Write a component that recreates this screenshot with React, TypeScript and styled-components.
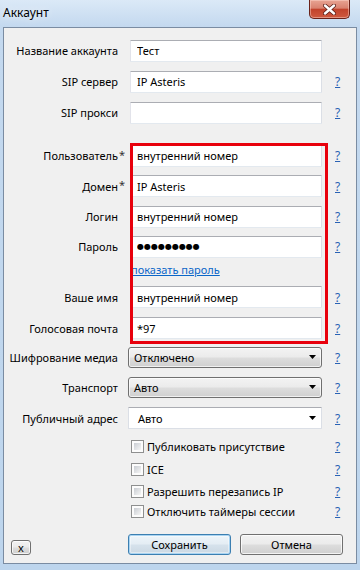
import { createGlobalStyle, styled } from "styled-components";

const GlobalStyle = createGlobalStyle`
  html, body {
    margin: 0;
    padding: 0;
  }
  body {
    width: 360px;
    height: 570px;
    overflow: hidden;
    font-family: "Noto Sans", "Open Sans", sans-serif;
  }
  * {
    box-sizing: border-box;
  }
`;

const Window = styled.div`
  width: 360px;
  height: 570px;
  display: flex;
  flex-direction: column;
  padding: 0 3px 6px 3px;
  background: linear-gradient(180deg, #dbe9f7 0%, #c4d9ef 26px, #bdd5ed 100%);
`;

const TitleBar = styled.div`
  height: 27px;
  flex-shrink: 0;
  display: flex;
  align-items: flex-start;
  justify-content: space-between;
`;

const Title = styled.span`
  margin-top: 5px;
  font-size: 12px;
  line-height: 16px;
  color: #000;
  text-shadow: 0 0 8px rgba(255, 255, 255, 0.95);
`;

const CloseBtn = styled.div`
  width: 41px;
  height: 19px;
  margin-right: 7px;
  display: flex;
  align-items: center;
  justify-content: center;
  border: 1px solid #6a2219;
  border-top: none;
  border-radius: 0 0 5px 5px;
  background: linear-gradient(
    180deg,
    #e8a493 0%,
    #d9826f 45%,
    #c2432c 52%,
    #cf5a40 100%
  );
  box-shadow: inset 0 0 0 1px rgba(255, 220, 210, 0.45);
`;

const Client = styled.div`
  flex: 1;
  display: flex;
  flex-direction: column;
  background: #f0f0f0;
  border: 1px solid #7a8ca2;
  padding-top: 7px;
`;

const Row = styled.div<{ $h: number }>`
  display: flex;
  align-items: center;
  height: ${(p) => p.$h}px;
`;

const Label = styled.div`
  width: 114px;
  flex-shrink: 0;
  text-align: right;
  font-size: 11px;
  color: #000;
  white-space: nowrap;
`;

const Star = styled.span`
  width: 12px;
  flex-shrink: 0;
  padding-left: 1px;
  font-size: 11px;
  color: #333;
  align-self: center;
  margin-top: -3px;
`;

const Field = styled.div`
  width: 192px;
  flex-shrink: 0;
  display: flex;
  align-items: center;
`;

const TextInput = styled.input<{ $dots?: boolean }>`
  width: 100%;
  height: 22px;
  margin: 0;
  padding: 0 6px;
  background: #fff;
  border: 1px solid;
  border-color: #abadb3 #dbdfe6 #e3e9ef #e2e3ea;
  border-radius: 1px;
  outline: none;
  color: #000;
  font-family: ${(p) => (p.$dots ? '"DejaVu Sans", sans-serif' : '"Noto Sans", sans-serif')};
  font-size: ${(p) => (p.$dots ? "8px" : "11px")};
`;

const Combo = styled.div<{ $editable?: boolean }>`
  width: 194px;
  height: ${(p) => (p.$editable ? 22 : 21)}px;
  margin-left: -2px;
  display: flex;
  align-items: center;
  padding-left: ${(p) => (p.$editable ? 9 : 5)}px;
  font-size: 11px;
  color: #000;
  border: 1px solid ${(p) => (p.$editable ? "#dbdfe6" : "#707070")};
  border-top-color: ${(p) => (p.$editable ? "#abadb3" : "#707070")};
  border-radius: ${(p) => (p.$editable ? 1 : 3)}px;
  background: ${(p) =>
    p.$editable
      ? "#fff"
      : "linear-gradient(180deg, #f3f3f3 0%, #ebebeb 48%, #dddddd 52%, #d0d0d0 100%)"};
  box-shadow: ${(p) => (p.$editable ? "none" : "inset 0 0 0 1px rgba(255,255,255,0.7)")};
`;

const Arrow = styled.svg`
  margin-left: auto;
  margin-right: 5px;
`;

const Help = styled.a`
  padding-left: 13px;
  font-size: 12px;
  color: #2a62b4;
  text-decoration: underline;
`;

const Link = styled.a`
  margin-left: 1px;
  font-size: 11px;
  color: #0a66c8;
  text-decoration: underline;
`;

const Spacer = styled.div<{ $h: number }>`
  height: ${(p) => p.$h}px;
  flex-shrink: 0;
`;

const Highlight = styled.div`
  position: relative;
  &::after {
    content: "";
    position: absolute;
    left: 126px;
    width: 192px;
    top: 3px;
    bottom: -4px;
    border: 3px solid #e8000c;
    pointer-events: none;
  }
`;

const CheckLabel = styled.label`
  display: flex;
  align-items: center;
  gap: 3px;
  margin-left: 1px;
  font-size: 11px;
  color: #000;
  white-space: nowrap;
`;

const CheckBox = styled.span`
  width: 13px;
  height: 13px;
  flex-shrink: 0;
  border: 1px solid #8e8f8f;
  padding: 2px;
  background: linear-gradient(135deg, #c9cdd3, #f6f6f6) content-box, #fcfcfc;
`;

const Footer = styled.div`
  margin-top: auto;
  display: flex;
  align-items: flex-end;
  padding: 0 0 8px 7px;
`;

const Button = styled.button<{ $primary?: boolean; $small?: boolean }>`
  width: ${(p) => (p.$small ? 20 : 103)}px;
  height: ${(p) => (p.$small ? 15 : 21)}px;
  margin: 0;
  padding: 0;
  font-family: "Noto Sans", sans-serif;
  font-size: 11px;
  line-height: 1;
  color: #000;
  border: 1px solid ${(p) => (p.$primary ? "#3c7fb1" : "#707070")};
  border-radius: 3px;
  background: ${(p) =>
    p.$primary
      ? "linear-gradient(180deg, #eef5fa 0%, #e4edf4 48%, #d6e2ec 52%, #cbd8e3 100%)"
      : "linear-gradient(180deg, #f2f2f2 0%, #ebebeb 48%, #dddddd 52%, #cfcfcf 100%)"};
  box-shadow: ${(p) =>
    p.$primary
      ? "inset 0 0 0 1px #a9d4f2, inset 0 0 0 2px rgba(255,255,255,0.4)"
      : "inset 0 0 0 1px rgba(255,255,255,0.75)"};
`;

const SaveBtn = styled(Button)`
  margin-left: 97px;
`;

const CancelBtn = styled(Button)`
  margin-left: 9px;
`;

function DropArrow() {
  return (
    <Arrow width="7" height="4" viewBox="0 0 7 4">
      <path d="M0 0 H7 L3.5 4 Z" fill="#000" />
    </Arrow>
  );
}

type FieldRowProps = {
  label: string;
  h: number;
  value?: string;
  star?: boolean;
  help?: boolean;
  dots?: boolean;
};

function FieldRow({ label, h, value = "", star, help = true, dots }: FieldRowProps) {
  return (
    <Row $h={h}>
      <Label>{label}</Label>
      <Star>{star ? "*" : ""}</Star>
      <Field>
        <TextInput $dots={dots} value={value} readOnly />
      </Field>
      {help && <Help>?</Help>}
    </Row>
  );
}

function ComboRow({ label, h, value, editable }: { label: string; h: number; value: string; editable?: boolean }) {
  return (
    <Row $h={h}>
      <Label>{label}</Label>
      <Star />
      <Field>
        <Combo $editable={editable}>
          {value}
          <DropArrow />
        </Combo>
      </Field>
      <Help>?</Help>
    </Row>
  );
}

function CheckRow({ text, h }: { text: string; h: number }) {
  return (
    <Row $h={h}>
      <Label />
      <Star />
      <Field>
        <CheckLabel>
          <CheckBox />
          {text}
        </CheckLabel>
      </Field>
      <Help>?</Help>
    </Row>
  );
}

export default function App() {
  return (
    <>
      <GlobalStyle />
      <Window>
        <TitleBar>
          <Title>Аккаунт</Title>
          <CloseBtn>
            <svg width="13" height="11" viewBox="0 0 13 11">
              <path
                d="M2 1.5 L11 9.5 M11 1.5 L2 9.5"
                stroke="#5a1d16"
                strokeWidth="4"
                strokeLinecap="round"
              />
              <path
                d="M2 1.5 L11 9.5 M11 1.5 L2 9.5"
                stroke="#fff"
                strokeWidth="2.4"
                strokeLinecap="round"
              />
            </svg>
          </CloseBtn>
        </TitleBar>
        <Client>
          <FieldRow label="Название аккаунта" h={31} value="Тест" help={false} />
          <FieldRow label="SIP сервер" h={31} value="IP Asteris" />
          <FieldRow label="SIP прокси" h={31} />
          <Spacer $h={12} />
          <Highlight>
            <FieldRow label="Пользователь" h={31} value="внутренний номер" star />
            <FieldRow label="Домен" h={30} value="IP Asteris" star />
            <FieldRow label="Логин" h={31} value="внутренний номер" />
            <FieldRow label="Пароль" h={29} value="●●●●●●●●●" dots />
            <Row $h={17}>
              <Label />
              <Star />
              <Field>
                <Link>показать пароль</Link>
              </Field>
            </Row>
            <FieldRow label="Ваше имя" h={38} value="внутренний номер" />
            <FieldRow label="Голосовая почта" h={24} value="*97" />
          </Highlight>
          <ComboRow label="Шифрование медиа" h={34} value="Отключено" />
          <ComboRow label="Транспорт" h={26} value="Авто" />
          <ComboRow label="Публичный адрес" h={36} value="Авто" editable />
          <CheckRow text="Публиковать присутствие" h={20} />
          <CheckRow text="ICE" h={26} />
          <CheckRow text="Разрешить перезапись IP" h={18} />
          <CheckRow text="Отключить таймеры сессии" h={22} />
          <Footer>
            <Button $small>x</Button>
            <SaveBtn $primary>Сохранить</SaveBtn>
            <CancelBtn>Отмена</CancelBtn>
          </Footer>
        </Client>
      </Window>
    </>
  );
}
